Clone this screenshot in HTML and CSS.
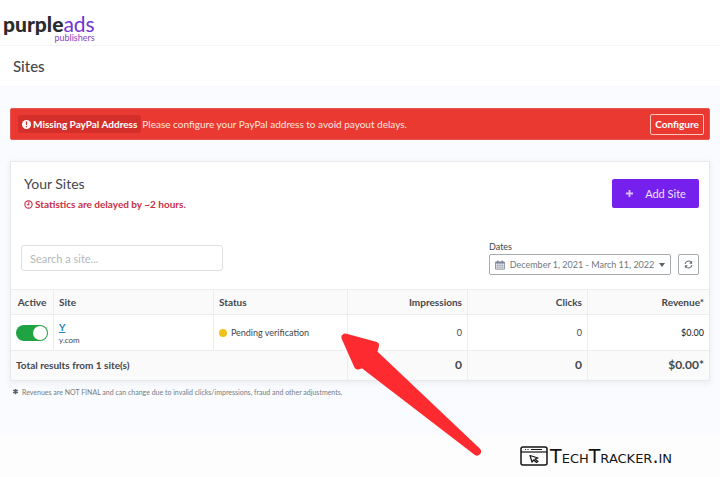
FILE: index.html
```html
<!DOCTYPE html>
<html lang="en">
<head>
<meta charset="utf-8">
<meta name="viewport" content="width=device-width, initial-scale=1">
<title>Sites - PurpleAds Publishers</title>
<link rel="stylesheet" href="styles.css">
</head>
<body>
<header class="topbar">
  <a class="brand" href="#"><span class="brand-name">purple<span class="brand-accent">ads</span></span><span class="brand-sub">publishers</span></a>
</header>
<div class="titlebar"><h1>Sites</h1></div>
<main class="content">
  <section class="alert">
    <strong class="alert-label">
      <svg class="icon-small" viewBox="0 0 16 16" aria-hidden="true"><circle cx="8" cy="8" r="8" fill="#fff"/><path d="M6.7 2.8h2.6L8.9 9H7.1z" fill="#d22c28"/><rect x="6.8" y="10.4" width="2.4" height="2.6" fill="#d22c28"/></svg>
      Missing PayPal Address</strong>
    <span class="alert-text">Please configure your PayPal address to avoid payout delays.</span>
    <button class="configure" type="button">Configure</button>
  </section>

  <section class="card">
    <div class="card-head">
      <div>
        <h2>Your Sites</h2>
        <p class="delay"><svg class="icon-small" viewBox="0 0 16 16" fill="none" stroke="currentColor" stroke-width="2" aria-hidden="true"><circle cx="8" cy="8" r="6.5"/><path d="M8.500 4v4.500H5"/></svg>Statistics are delayed by ~2 hours.</p>
      </div>
      <button class="add" type="button"><svg viewBox="0 0 10 10" aria-hidden="true"><path d="M5 1v8M1 5h8" stroke="#d9bcff" stroke-width="2"/></svg>Add Site</button>
    </div>
    <div class="filters">
      <input class="search" type="text" placeholder="Search a site..." aria-label="Search a site">
      <div class="dates">
        <label for="range">Dates</label>
        <div class="date-row">
          <button class="range" id="range" type="button">
            <svg class="calendar" viewBox="0 0 18 18" fill="none" stroke="#7b8594" aria-hidden="true"><path d="M1 3.500h16v13H1z" stroke-width="1.500"/><path d="M1 5h16" stroke-width="3"/><path d="M5 6v10M9 6v10M13 6v10M1 9.500h16M1 13h16"/><path d="M5 1v3M13 1v3" stroke-width="2.500"/></svg>
            <span>December 1, 2021 - March 11, 2022</span>
            <svg class="caret" viewBox="0 0 6 4" aria-hidden="true"><path d="M0 0h6L3 4z" fill="#59626e"/></svg>
          </button>
          <button class="refresh" type="button" aria-label="Refresh"><svg viewBox="0 0 16 16" fill="none" stroke="#666e78" stroke-width="2" aria-hidden="true"><path d="M2 7a6 6 0 0 1 10.500-3M14 9a6 6 0 0 1-10.500 3"/><path d="M14.500 1v5.500H9zM1.500 15V9.500H7z" fill="#666e78" stroke="none"/></svg></button>
        </div>
      </div>
    </div>
    <table>
      <colgroup><col class="c-active"><col class="c-site"><col class="c-status"><col class="c-impressions"><col class="c-clicks"><col class="c-revenue"></colgroup>
      <thead>
        <tr><th class="center">Active</th><th>Site</th><th>Status</th><th class="num">Impressions</th><th class="num">Clicks</th><th class="num">Revenue*</th></tr>
      </thead>
      <tbody>
        <tr>
          <td class="center"><input class="toggle" type="checkbox" role="switch" aria-label="Active" checked></td>
          <td><a class="site-link" href="#">Y</a><span class="domain">y.com</span></td>
          <td><span class="status"><span class="dot"></span>Pending verification</span></td>
          <td class="num">0</td><td class="num">0</td><td class="num revenue">$0.00</td>
        </tr>
      </tbody>
      <tfoot>
        <tr><th class="total" colspan="3">Total results from 1 site(s)</th><td class="num">0</td><td class="num">0</td><td class="num">$0.00*</td></tr>
      </tfoot>
    </table>
    <svg class="arrow" viewBox="0 0 140 124" aria-hidden="true"><path d="M4.500 4.500L34 12.500 32 20 136 118.500 22 31 17 32.500z" fill="#fd2b30" stroke="#fd2b30" stroke-width="8" stroke-linejoin="round"/></svg>
  </section>
  <p class="note"><svg viewBox="0 0 8 8" aria-hidden="true"><path d="M4 1v6M1.400 2.500l5.200 3M1.400 5.500l5.200-3" stroke="#59616a" stroke-width="1.800"/></svg>Revenues are NOT FINAL and can change due to invalid clicks/impressions, fraud and other adjustments.</p>
</main>
<footer class="footer">
  <svg viewBox="0 0 28 20" fill="none" stroke="#151515" aria-hidden="true"><rect x="1" y="1" width="26" height="18" rx="2" stroke-width="1.500"/><path d="M1 6h26" stroke-width="1.200"/><path d="M5 3.500h1M7.500 3.500h1M11 3.500h11"/><path d="M10 9.500l8 2.500-3 1 3 2.500-1.500 1-2.700-2.500L12 16z" stroke-width="1.200" stroke-linejoin="round"/></svg>
  <span>TechTracker.in</span>
</footer>
</body>
</html>
```

FILE: styles.css
```css
* { box-sizing: border-box; }
body {
  margin: 0;
  min-height: 100vh;
  display: flex;
  flex-direction: column;
  background: #fafbfe;
  color: #43474c;
  font: 10px/12px Lato, "Liberation Sans", sans-serif;
}
h1, h2, p { margin: 0; }
button, input { font: inherit; color: inherit; margin: 0; }
button { display: flex; align-items: center; justify-content: center; padding: 0; border-radius: 2px; }
svg { display: block; flex: none; }

.topbar { height: 46px; padding: 12px 3px 0; background: #fff; border-bottom: 1px solid #f5f5f7; }
.brand { display: inline-flex; flex-direction: column; align-items: flex-end; color: #2b2b2d; text-decoration: none; }
.brand-name { font-size: 21px; line-height: 23px; font-weight: 900; }
.brand-accent { color: #7136d5; font-weight: 400; }
.brand-sub { color: #8a43c6; font-size: 9px; line-height: 6px; }
.titlebar { padding: 10px 13px; background: #fff; border-bottom: 1px solid #f7f8fb; }
h1 { font-size: 15px; line-height: 20px; font-weight: 500; }

.content { padding: 21px 10px 0; flex: 1; }
.alert { display: flex; align-items: center; min-height: 32px; padding: 4px 5px 4px 7px; background: #e93931; border: 1px solid #e65650; border-radius: 2px; color: #fff; }
.alert-label { display: flex; align-items: center; gap: 2px; padding: 3px 4px; margin-right: 1px; background: #d42f2b; border-radius: 3px; }
.alert-text { color: #ffe6df; }
.icon-small { width: 9px; height: 9px; }
.configure { margin-left: auto; width: 54px; height: 21px; background: transparent; border: 1px solid #ffc7bd; color: #fff; font-weight: 700; }

.card { position: relative; margin-top: 21px; background: #fff; border: 1px solid #e8e9eb; box-shadow: 0 2px 6px #e8ebf0; }
.card-head { display: flex; justify-content: space-between; align-items: flex-start; padding: 13px 10px 0 13px; }
h2 { font-size: 14px; line-height: 18px; font-weight: 400; }
.delay { display: flex; align-items: center; gap: 2px; margin-top: 5px; color: #c72f45; font-weight: 700; }
.add { gap: 11px; width: 87px; height: 29px; margin-top: 4px; background: #7520ed; border: 0; color: #eee2ff; font-size: 11px; }
.add svg { width: 9px; height: 9px; }
.filters { display: flex; justify-content: space-between; align-items: flex-start; padding: 30px 10px 14px 10px; }
.search { width: 202px; height: 26px; margin-top: 5px; padding: 0 8px; background: #fff; border: 1px solid #dddfe2; border-radius: 3px; font-size: 11px; }
.search::placeholder { color: #b4b8bd; opacity: 1; }
.dates label { display: block; line-height: 13px; font-size: 9px; }
.date-row { display: flex; gap: 7px; margin-top: 1px; }
.range, .refresh { height: 21px; background: #fff; border: 1px solid #a6abb0; color: #707780; }
.range { width: 182px; padding: 0 5px; justify-content: space-between; white-space: nowrap; font-size: 9px; }
.refresh { width: 21px; }
.refresh svg { width: 9px; height: 9px; }
.calendar { width: 10px; height: 10px; }
.caret { width: 6px; height: 4px; }

table { width: 100%; table-layout: fixed; border-collapse: collapse; }
.c-active { width: 6.1%; }
.c-site { width: 22.9%; }
.c-status { width: 19.2%; }
.c-impressions, .c-clicks { width: 17.2%; }
th, td { padding: 0 5px; border: 1px solid #eceeee; text-align: left; }
tr > :first-child { border-left: 0; }
tr > :last-child { border-right: 0; }
th { font-weight: 700; }
thead th { height: 25px; background: #fafafa; }
tbody td { height: 36px; font-size: 9px; }
tfoot th, tfoot td { height: 29px; background: #fafafa; border-bottom: 0; }
tfoot td { font-size: 12px; font-weight: 700; }
th.num, td.num { text-align: right; }
th.center, td.center { text-align: center; padding: 0; }
tbody .revenue { font-weight: 500; color: #2d3033; }
.toggle { display: block; appearance: none; width: 32px; height: 16px; margin: 0 5px; border-radius: 8px; background: #1fa343; }
.toggle::before { content: ""; display: block; width: 14px; height: 14px; margin: 1px 1px 1px 17px; border-radius: 50%; background: #fff; }
.toggle:not(:checked) { background: #a6abb0; }
.toggle:not(:checked)::before { margin-left: 1px; }
.site-link { display: block; width: max-content; color: #2085c1; font-size: 10px; font-weight: 700; }
.domain { display: block; margin-top: 2px; font-size: 8px; line-height: 10px; }
.status { display: flex; align-items: center; gap: 4px; }
.dot { width: 8px; height: 8px; border-radius: 50%; background: #f1c119; }
.arrow { position: absolute; left: 47.300%; bottom: -77px; width: 140px; height: 124px; overflow: visible; }
.note { display: flex; align-items: center; gap: 3px; margin-top: 5px; padding-left: 2px; color: #747b84; font-size: 7px; }
.note svg { width: 7px; height: 7px; }

.footer { display: flex; justify-content: flex-end; align-items: center; gap: 2px; height: 42px; padding-right: 48px; background: #fdfdfe; color: #151515; font: 19px/20px "DejaVu Sans", sans-serif; font-variant-caps: small-caps; }
.footer svg { width: 28px; height: 20px; }
```
